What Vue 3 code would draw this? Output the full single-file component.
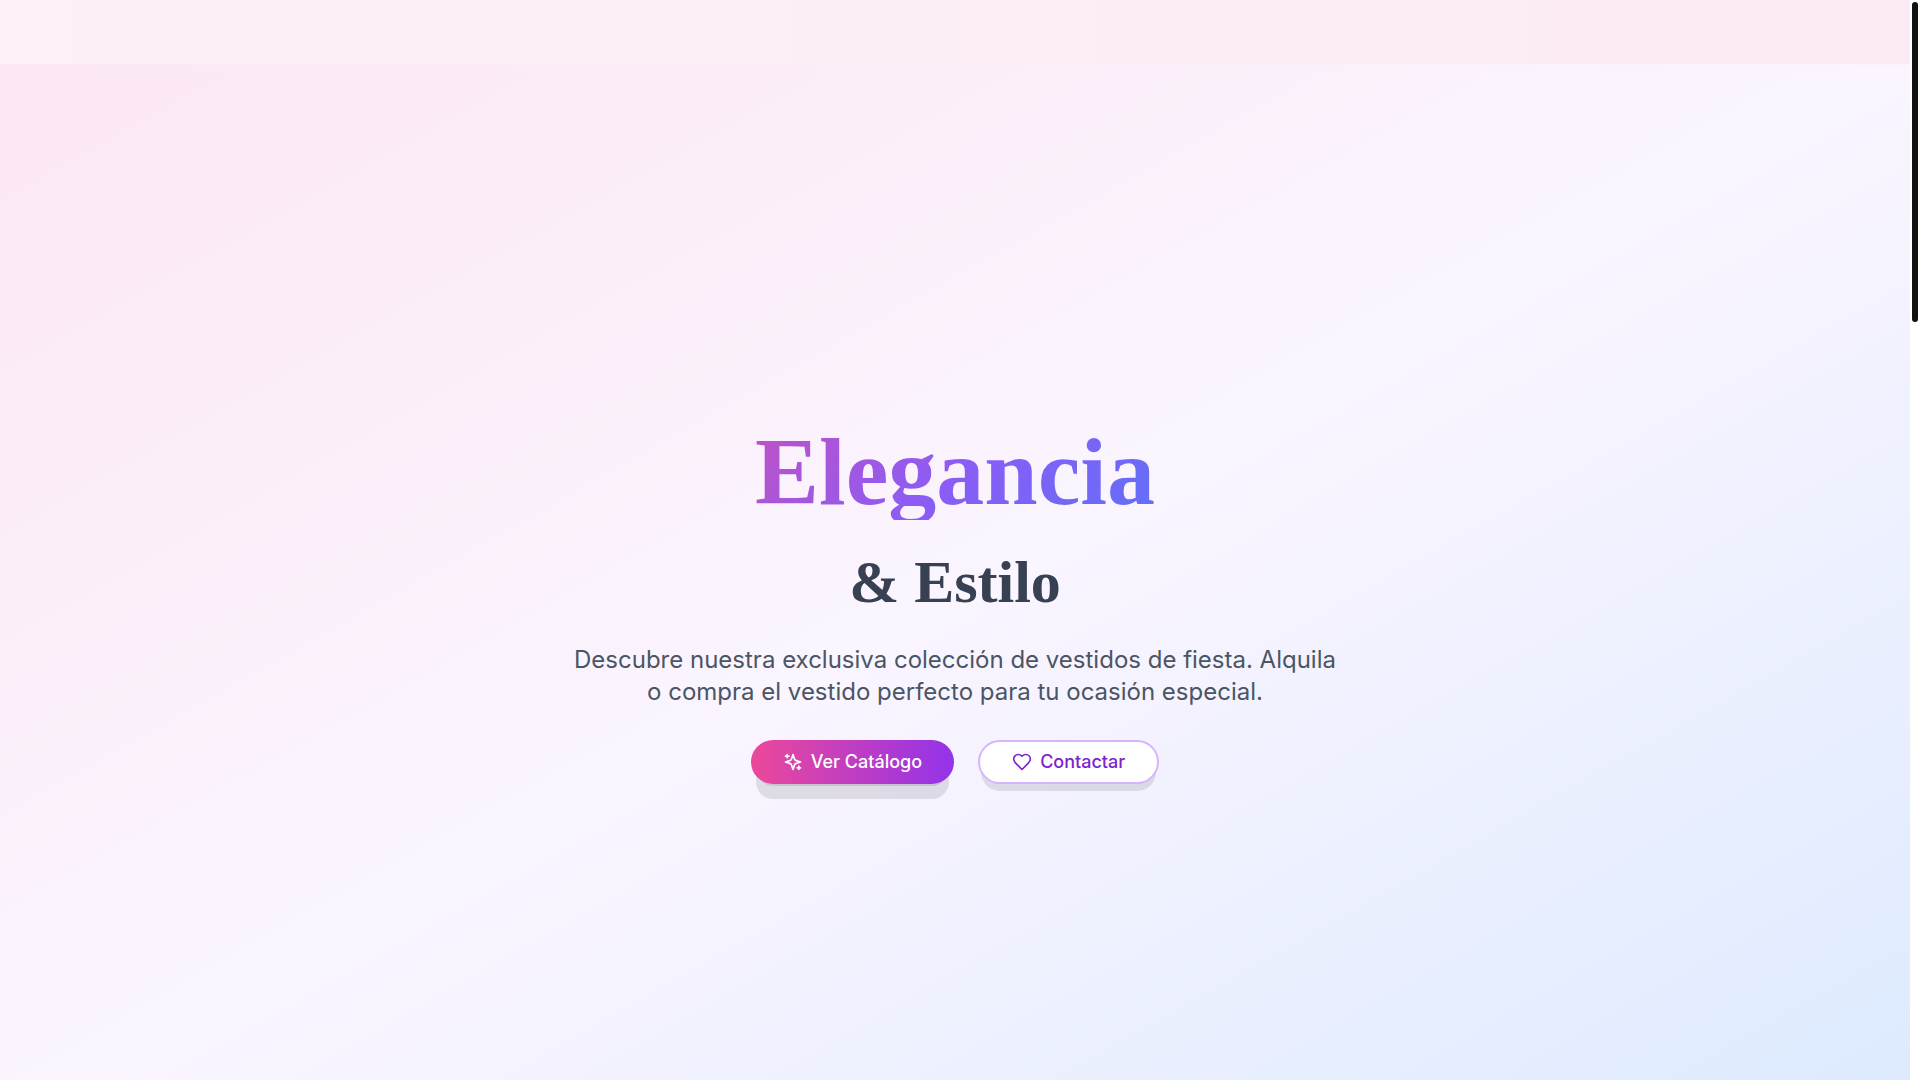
<script setup>
const actions = [
  {
    id: 'catalog',
    label: 'Ver Catálogo',
    variant: 'primary',
    icon: [
      'm12 3-1.912 5.813a2 2 0 0 1-1.275 1.275L3 12l5.813 1.912a2 2 0 0 1 1.275 1.275L12 21l1.912-5.813a2 2 0 0 1 1.275-1.275L21 12l-5.813-1.912a2 2 0 0 1-1.275-1.275L12 3Z',
      'M5 3v4',
      'M19 17v4',
      'M3 5h4',
      'M17 19h4',
    ],
  },
  {
    id: 'contact',
    label: 'Contactar',
    variant: 'secondary',
    icon: [
      'M19 14c1.49-1.46 3-3.21 3-5.5A5.5 5.5 0 0 0 16.5 3c-1.76 0-3 .5-4.5 2-1.5-1.5-2.74-2-4.5-2A5.5 5.5 0 0 0 2 8.5c0 2.3 1.5 4.05 3 5.5l7 7Z',
    ],
  },
]
</script>

<template>
  <div class="viewport">
    <div class="page">
      <header class="topbar"></header>
      <main class="hero">
        <div class="hero-content">
          <h1 class="title">
            <span class="title-main">Elegancia</span>
            <span class="title-sub">&amp; Estilo</span>
          </h1>
          <p class="lead">
            Descubre nuestra exclusiva colección de vestidos de fiesta. Alquila o compra el vestido
            perfecto para tu ocasión especial.
          </p>
          <div class="actions">
            <button
              v-for="action in actions"
              :key="action.id"
              type="button"
              class="button"
              :class="action.variant"
            >
              <svg class="icon" viewBox="0 0 24 24" aria-hidden="true">
                <path v-for="d in action.icon" :key="d" :d="d" />
              </svg>
              {{ action.label }}
            </button>
          </div>
        </div>
      </main>
    </div>
    <div class="scroll-track" aria-hidden="true">
      <div class="scroll-thumb"></div>
    </div>
  </div>
</template>

<style>
body {
  margin: 0;
  background: #fff;
}
</style>

<style scoped>
.viewport {
  display: flex;
  height: 100vh;
  overflow: hidden;
  font-family: Inter, "Liberation Sans", sans-serif;
}

.page {
  flex: 1;
  min-width: 0;
}

.topbar {
  position: relative;
  height: 64px;
  background: linear-gradient(to right, #fcf1f7, #fceef5 50%, #fbe9f3);
}

/* Hairline that softens the edge between the bar and the hero */
.topbar::after {
  content: "";
  position: absolute;
  top: 100%;
  left: 0;
  right: 0;
  height: 1px;
  background: rgba(252, 238, 245, 0.6);
}

.hero {
  display: flex;
  align-items: center;
  justify-content: center;
  min-height: 100vh;
  background: linear-gradient(to bottom right, #fce7f3, #faf5ff, #dbeafe);
}

.hero-content {
  display: flex;
  flex-direction: column;
  align-items: center;
  gap: 32px;
  width: 100%;
  max-width: 896px;
  text-align: center;
}

.title {
  display: flex;
  flex-direction: column;
  gap: 32px;
  width: 100%;
  max-width: 832px;
  margin: 0;
  font-family: "Liberation Serif", serif;
  font-weight: 700;
}

.title-main {
  font-size: 96px;
  line-height: 96px;
  color: transparent;
  background: linear-gradient(135deg, #ec4899, #8b5cf6, #3b82f6);
  background-clip: text;
}

.title-sub {
  font-size: 60px;
  line-height: 60px;
  color: #374151;
}

.lead {
  max-width: 768px;
  margin: 0;
  font-size: 24px;
  font-weight: 400;
  line-height: 32px;
  color: #4b5563;
}

.actions {
  display: flex;
  gap: 24px;
}

.button {
  display: inline-flex;
  align-items: center;
  gap: 8px;
  box-sizing: border-box;
  height: 44px;
  padding: 0 32px;
  border: 0;
  border-radius: 22px;
  font-family: inherit;
  font-size: 18px;
  font-weight: 500;
  line-height: 28px;
  white-space: nowrap;
  cursor: pointer;
}

.primary {
  color: #fff;
  background: linear-gradient(to right, #ec4899, #9333ea);
  box-shadow: 0 20px 0 -5px rgba(0, 0, 0, 0.1), 0 8px 0 -6px rgba(0, 0, 0, 0.1);
}

.secondary {
  color: #7e22ce;
  background: #fff;
  border: 2px solid #d8b4fe;
  box-shadow: 0 10px 0 -3px rgba(0, 0, 0, 0.1), 0 4px 0 -4px rgba(0, 0, 0, 0.1);
}

.icon {
  width: 20px;
  height: 20px;
  fill: none;
  stroke: currentColor;
  stroke-width: 2;
  stroke-linecap: round;
  stroke-linejoin: round;
}

.scroll-track {
  flex: none;
  box-sizing: border-box;
  width: 10px;
  padding: 2px;
  background: #fff;
}

.scroll-thumb {
  height: 320px;
  border-radius: 3px;
  background: #111;
}
</style>
